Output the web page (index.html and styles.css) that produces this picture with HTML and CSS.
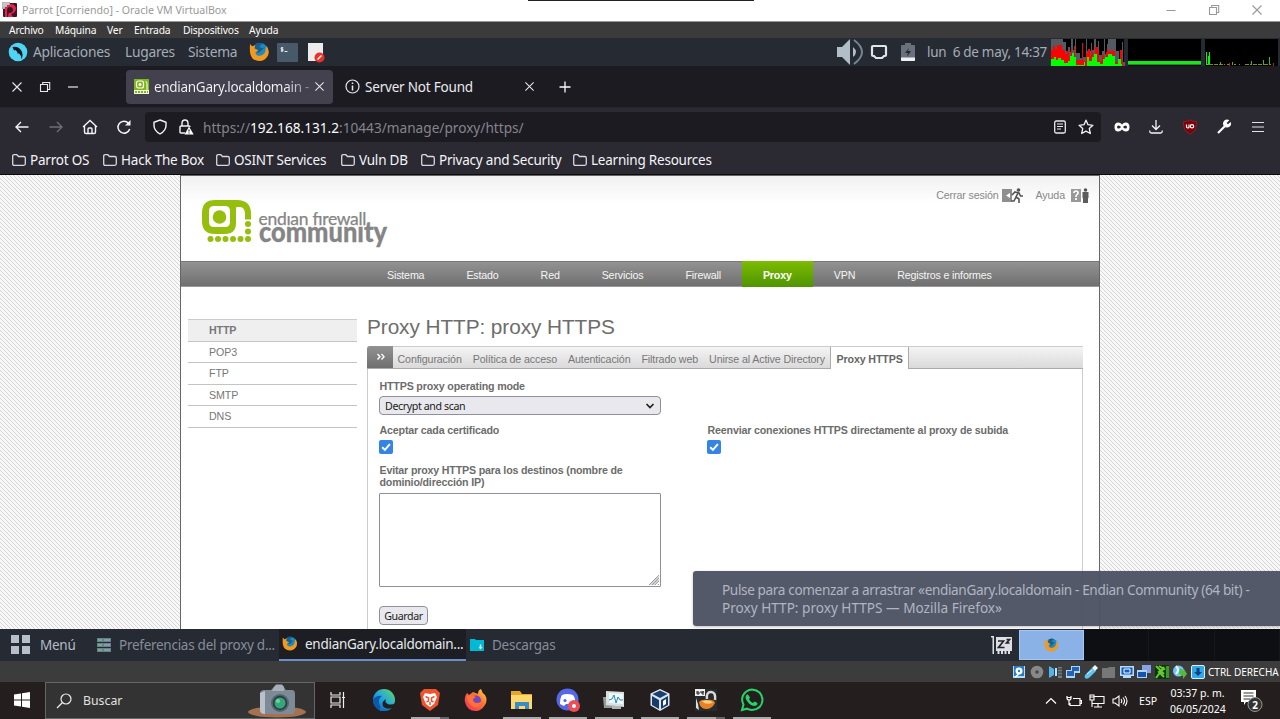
FILE: index.html
```html
<!DOCTYPE html>
<html lang="es">
<head>
<meta charset="utf-8">
<title>Parrot [Corriendo] - Oracle VM VirtualBox</title>
<link rel="stylesheet" href="styles.css">
</head>
<body>
<svg class="defs" width="0" height="0" aria-hidden="true">
  <defs>
    <symbol id="folder" viewBox="0 0 16 16"><path d="M1.7 4.2q0-1.5 1.5-1.5h2.6l1.7 1.8h5.3q1.5 0 1.5 1.5v5.8q0 1.5-1.5 1.5H3.2q-1.5 0-1.5-1.5z" fill="none" stroke="#d8d8de" stroke-width="1.3"/></symbol>
    <symbol id="fox" viewBox="0 0 20 20"><circle cx="10.5" cy="9" r="8" fill="#1d8ac4"/><path d="M5 3q4-4 9-1-3 0-4 3l4 1-4 4-3 0z" fill="#165f8f"/><path d="M1 2l2 2 3-1-1 3 4 2-3 2q1 4 5 3 5-1 5-7l1-2q3 5 1 9-3 5-8 5-8 0-9-8-.4-4 0-8z" fill="#f39a1e"/></symbol>
    <symbol id="close" viewBox="0 0 12 12"><path d="M1.5 1.5l9 9m0-9l-9 9" fill="none" stroke="currentColor" stroke-width="1.1"/></symbol>
    <symbol id="restore" viewBox="0 0 12 12"><path d="M1.5 3.5h7v7h-7zM3.7 3.5v-2h7v7h-2" fill="none" stroke="currentColor" stroke-width="1.1"/></symbol>
    <symbol id="check" viewBox="0 0 14 14"><rect width="14" height="14" rx="2" fill="#3584e4"/><path d="M3.2 7.2l2.7 2.7 5-5.7" fill="none" stroke="#fff" stroke-width="2"/></symbol>
    <linearGradient id="edge" x1="0" y1="1" x2="1" y2="0"><stop offset="0" stop-color="#0a5fc0"/><stop offset=".5" stop-color="#22a6df"/><stop offset="1" stop-color="#69dc58"/></linearGradient>
    <linearGradient id="ffx" x1="0" y1="1" x2="1" y2="0"><stop offset="0" stop-color="#f02b63"/><stop offset=".6" stop-color="#fd7430"/><stop offset="1" stop-color="#ffe34a"/></linearGradient>
  </defs>
</svg>

<header class="titlebar">
  <svg class="vm-logo" viewBox="0 0 16 16"><rect x="1" y="1" width="14" height="14" rx="1" fill="#4a1020"/><path d="M4 3q8-3 10 3 0 5-5 6l2 3H6q0-3 1-4 4 0 4-3 0-3-3-3-3 0-3 4v6H3V6z" fill="#d62a55"/><path d="M0 0h8v3H5v2H3v2H0z" fill="#a9a5a7"/><path d="M2 0v6M4 0v4M6 0v3M0 2h7M0 4h5" stroke="#e5e5e5" stroke-width=".6"/></svg>
  <span class="vm-title">Parrot [Corriendo] - Oracle VM VirtualBox</span>
  <svg class="win-btn" viewBox="0 0 12 12"><path d="M1.5 6.5h9" stroke="currentColor"/></svg>
  <svg class="win-btn"><use href="#restore"/></svg>
  <svg class="win-btn"><use href="#close"/></svg>
  <i class="top-strip"></i>
</header>

<nav class="vm-menu"><span>Archivo</span><span>Máquina</span><span>Ver</span><span>Entrada</span><span>Dispositivos</span><span>Ayuda</span></nav>

<div class="panel">
  <svg class="parrot" viewBox="0 0 20 20"><circle cx="10" cy="10" r="9.3" fill="#4fd4f3"/><path d="M4.500 5q6-1 9 4 2 3.500 0 8.500 0-4.500-3-6.500l-.5 1.500Q9.500 9 7.500 8L6 8.500z" fill="#10181f"/></svg>
  <span class="p-apps">Aplicaciones</span><span class="p-places">Lugares</span><span class="p-system">Sistema</span>
  <svg class="ic22"><use href="#fox"/></svg>
  <svg class="term" viewBox="0 0 21 19"><rect width="21" height="19" rx="1" fill="#48596a"/><path d="M6.300 4.800H4.200v1.500H6v1.700H3.800M5 4v5M7.500 8.500h3" fill="none" stroke="#e6ecef" stroke-width="1"/></svg>
  <svg class="note" viewBox="0 0 18 21"><path d="M1 1h15v18H1z" fill="#ececec"/><circle cx="12.500" cy="15.500" r="5" fill="#e5332b"/><path d="M10.500 17.500l4-4" stroke="#fff" stroke-width="1.500"/></svg>
  <div class="tray">
    <svg class="vol" viewBox="0 0 28 28"><path d="M1 9h5l8-8v26l-8-8H1z" fill="#b1bdc7"/><path d="M17 9q6 5 0 10z" fill="#b1bdc7"/><path d="M18 2q16 12 0 24" fill="none" stroke="#748592" stroke-width="2"/></svg>
    <svg class="net" viewBox="0 0 18 16"><path d="M3 2h12q1 0 1 1v8q0 1-1 1h-1l-2 2H6l-2-2H3q-1 0-1-1V3q0-1 1-1z" fill="none" stroke="#e1e4e8" stroke-width="2.200"/></svg>
    <svg class="bat" viewBox="0 0 14 18"><path d="M4 0h6v2h3q1 0 1 1v14q0 1-1 1H1q-1 0-1-1V3q0-1 1-1h3z" fill="#6b717b"/><path d="M8 5L4 10h3l-1 4 4-6H7z" fill="#252b34"/><path d="M0 14.500h14V17q0 1-1 1H1q-1 0-1-1z" fill="#eef0f2"/></svg>
    <span class="clock">lun&nbsp; 6 de may, 14:37</span>
    <svg class="graphs" viewBox="0 0 228 28">
      <path fill="#000" d="M0 1h73v27H0zM77 1h73v27H77zM154 1h73v27h-73z"/>
      <path fill="#555a62" d="M0 28V1h12v3h3v9h2V9h2v5h1V1h2v11h2V1h1v14h4v5h2V5h1v14h3V1h1v12h4V5h1v7h2V1h2v8h2V3h1v14h3v-4h2V1h1v15h2V6h1V1h8v12h3v8h3V4h1v20h2v4z"/>
      <path fill="#f00" d="M0 28V12h2V8h2v3h2V7h5v5h3v4h2v-3h2v6h2v-8h1v6h2V8h1v14h7V5h1v18h3v-8h2v-4h2v7h1v-5h2v5h2V9h3v4h1v10h3v-6h2v5h2v-8h1v-3h1v2h7v11h3v-3h2V12h2v12h1v4z"/>
      <path fill="#0f0" d="M0 28v-7h3v-2h2v3h2v-2h3v2h3v3h4v-2h2v-5h2v-3h2v4h2v8h8v-3h1v4h2v-9h2v4h3v-4h2v-3h3v8h3v2h3v-5h2v-2h3V16h4v2h3v8h3v-5h3v5h1v2z"/>
      <path fill="#19e71d" d="M77 23h73v4H77z"/><path d="M77 26.500h73" stroke="#0b9b13"/>
      <path fill="#0f0" d="M155 14h1v12h1V18h1v-4h1v12h2v1h-6z"/><path d="M158 26.500h16m2 0h2m5 0h2m3 0h1m5 0h6m2 0h9m2 0h4m2 0h1" stroke="#7f8f10" stroke-dasharray="4 1"/><path d="M169.500 24v3m12-3v3m19-4v4m12-5v5m6-8v8" stroke="#35be13"/><path d="M178.500 25v3m44-3v3" stroke="#bc1d12"/>
    </svg>
  </div>
</div>

<div class="tabstrip">
  <svg class="tb-ic"><use href="#close"/></svg>
  <svg class="tb-ic"><use href="#restore"/></svg>
  <svg class="tb-ic" viewBox="0 0 12 12"><path d="M1 6h10" stroke="currentColor" stroke-width="1.200"/></svg>
  <div class="tab active">
    <svg class="fav" viewBox="0 0 15 15"><path d="M0 0h15v15H0z" fill="#f2f7df"/><path d="M0 0h15v11H0z" fill="#7eb61b"/><rect x="2.500" y="2" width="7" height="7" rx="2" fill="none" stroke="#fff" stroke-width="1.200"/><circle cx="6" cy="5.500" r="1.500" fill="#fff"/><path d="M11.500 2.500q1.500 0 1.500 2v7" fill="none" stroke="#fff"/><path d="M1 13h13" stroke="#7eb61b" stroke-width="2" stroke-dasharray="2 1"/></svg>
    <span class="tab-title fade">endianGary.localdomain -</span>
    <svg class="tab-x"><use href="#close"/></svg>
  </div>
  <div class="tab">
    <svg class="fav" viewBox="0 0 15 15"><circle cx="7.500" cy="7.500" r="6.500" fill="none" stroke="#e9e9ed" stroke-width="1.200"/><path d="M7.500 6.500v5M7.500 3.500v1.500" stroke="#e9e9ed" stroke-width="1.500"/></svg>
    <span class="tab-title">Server Not Found</span>
    <svg class="tab-x"><use href="#close"/></svg>
  </div>
  <svg class="newtab" viewBox="0 0 12 12"><path d="M6 .5v11M.5 6h11" stroke="#fbfbfe" stroke-width="1.300"/></svg>
</div>

<div class="navbar">
  <svg class="nb" viewBox="0 0 16 16"><path d="M14.500 8H2m5-5L2 8l5 5" fill="none" stroke="#f4f4f8" stroke-width="1.400"/></svg>
  <svg class="nb" viewBox="0 0 16 16"><path d="M1.500 8H14M9 3l5 5-5 5" fill="none" stroke="#706f78" stroke-width="1.300"/></svg>
  <svg class="nb" viewBox="0 0 16 16"><path d="M1 8l7-6.500L15 8M2.500 7v6q0 1.500 1.500 1.500h8q1.500 0 1.500-1.500V7M6 14v-4q0-1 1-1h2q1 0 1 1v4" fill="none" stroke="#f4f4f8" stroke-width="1.400"/></svg>
  <svg class="nb" viewBox="0 0 16 16"><path d="M13.700 10A6 6 0 1 1 12.500 4.200" fill="none" stroke="#f4f4f8" stroke-width="1.500"/><path d="M14.500 1v5.500H9z" fill="#f4f4f8"/></svg>
  <div class="urlbar">
    <svg class="shield" viewBox="0 0 16 16"><path d="M8 1l6 2.300v3.200q0 5-6 8.500-6-3.500-6-8.500V3.300z" fill="none" stroke="#f4f4f8" stroke-width="1.400"/></svg>
    <svg class="lock" viewBox="0 0 16 16"><path d="M4 7V4.500Q4 1 7 1t3 3.500V7M7 14H3q-1 0-1-1V8q0-1 1-1h8q1 0 1 1" fill="none" stroke="#f4f4f8" stroke-width="1.400"/><path d="M11 7.500l4.700 8H6.500z" fill="#fff"/><path d="M11 10.500v2m0 1v1" stroke="#222" stroke-width="1.200"/></svg>
    <span class="url">https://<b>192.168.131.2</b>:10443/manage/proxy/https/</span>
    <svg class="reader" viewBox="0 0 14 14"><rect x="1.700" y="1" width="10.600" height="12" rx="1.500" fill="none" stroke="#e9e9ed" stroke-width="1.300"/><path d="M4 4h6M4 6.500h6M4 9h4" stroke="#e9e9ed"/></svg>
    <svg class="star" viewBox="0 0 16 16"><path d="M8 1.200l2 4.500 4.900.6-3.600 3.300 1 4.900L8 12.100l-4.300 2.400 1-4.900L1.100 6.300 6 5.700z" fill="none" stroke="#f4f4f8" stroke-width="1.300" stroke-linejoin="round"/></svg>
  </div>
  <svg class="ext" viewBox="0 0 16 16"><path d="M8 5.500Q6.500 3.500 4.200 3.500.5 3.500.5 8t3.700 4.500q2.300 0 3.800-2 1.500 2 3.800 2 3.700 0 3.700-4.500t-3.700-4.500Q9.500 3.500 8 5.500z" fill="#fff"/><path d="M3 8q0-1.500 1.500-1.500T7 8Q6 9.500 4.500 9.500T3 8zM13 8q0-1.500-1.500-1.500T9 8q1 1.500 2.500 1.500T13 8z" fill="#2b2a33"/></svg>
  <svg class="ext" viewBox="0 0 16 16"><path d="M8 1v9M4 6.500L8 10.500l4-4M1.800 11.500v1q0 1.500 1.500 1.500h9.400q1.500 0 1.500-1.500v-1" fill="none" stroke="#f4f4f8" stroke-width="1.300"/></svg>
  <svg class="ext" viewBox="0 0 16 16"><path d="M8 .8q3 2 6.500 1.800.8 9-6.500 12.600Q.7 11.600 1.500 2.600 5 2.800 8 .8z" fill="#800008" stroke="#a33" stroke-width=".5"/><path d="M4.500 5.500v2q0 1.500 1.300 1.500T7 7.500v-2" fill="none" stroke="#fff" stroke-width="1.200"/><circle cx="10" cy="7.300" r="1.700" fill="none" stroke="#fff" stroke-width="1.200"/></svg>
  <svg class="ext" viewBox="0 0 16 16"><path d="M2 14l7-7" stroke="#fff" stroke-width="2.200"/><path d="M13.300 1.300A4 4 0 1 0 14.700 3L12 5.300 10.600 4z" fill="#fff"/></svg>
  <svg class="ext" viewBox="0 0 16 16"><path d="M2 3.500h12M2 8h12M2 12.500h12" stroke="#e2e2e6" stroke-width="1.200"/></svg>
</div>

<div class="bookmarks">
  <span><svg><use href="#folder"/></svg>Parrot OS</span><span><svg><use href="#folder"/></svg>Hack The Box</span><span><svg><use href="#folder"/></svg>OSINT Services</span><span><svg><use href="#folder"/></svg>Vuln DB</span><span><svg><use href="#folder"/></svg>Privacy and Security</span><span><svg><use href="#folder"/></svg>Learning Resources</span>
</div>

<div class="viewport">
  <div class="page">
    <div class="page-head">
      <svg class="logo" viewBox="0 0 190 64">
        <path d="M14 1h22q14 0 14 14v5.500h-6V16q0-8-5-8h-3q-1 0-1 1v15q0 11-11 11H14Q1 35 1 22V14Q1 1 14 1z" fill="#96be0d"/><path d="M13 7h11q5 0 5 5v11q0 5-5 5H13q-5 0-5-5V12q0-5 5-5z" fill="#fff"/><circle cx="18.500" cy="18" r="6.800" fill="#96be0d"/>
        <g fill="#96be0d"><circle cx="47" cy="25" r="3"/><circle cx="47" cy="32.500" r="3"/><circle cx="47" cy="40" r="3"/><circle cx="39.500" cy="40" r="3"/><circle cx="32" cy="40" r="3"/><circle cx="24.500" cy="40" r="3"/><circle cx="17" cy="40" r="3"/><circle cx="9.500" cy="40" r="3"/></g>
        <text class="logo-a" x="57.500" y="26" textLength="108">endıan fırewall</text>
        <text class="logo-b" x="58" y="42.500" textLength="128" lengthAdjust="spacingAndGlyphs">communıty</text>
      </svg>
      <div class="head-links">
        <span>Cerrar sesión</span>
        <svg viewBox="0 0 22 15"><path d="M0 1h10v13H0z" fill="#8e8e8e"/><path d="M4 7.500l4-2.500v5z" fill="#fff"/><circle cx="16.500" cy="2" r="1.800" fill="#555"/><path d="M10 7l3-3 4 1 1.500 3 2.500 0M16 5l-2 4 3 2v4M14 9l-2 4H9" fill="none" stroke="#555" stroke-width="1.600"/></svg>
        <span class="help">Ayuda</span>
        <svg class="help-ic" viewBox="0 0 19 15"><path d="M0 1h10v13H0z" fill="#999"/><path d="M3 5q0-2 2-2t2 2q0 1-1 1.500T5 9m0 1v2" fill="none" stroke="#fff" stroke-width="1.700"/><circle cx="14.500" cy="2" r="1.800" fill="#555"/><path d="M11.500 4h6v6H17v5h-5v-5h-.5z" fill="#5c5c5c"/></svg>
      </div>
    </div>
    <nav class="main-nav"><span>Sistema</span><span>Estado</span><span>Red</span><span>Servicios</span><span>Firewall</span><span class="on">Proxy</span><span>VPN</span><span>Registros e informes</span></nav>
    <div class="columns">
      <ul class="side"><li class="on">HTTP</li><li>POP3</li><li>FTP</li><li>SMTP</li><li>DNS</li></ul>
      <main>
        <h1>Proxy HTTP: proxy HTTPS</h1>
        <div class="subtabs"><svg class="more" viewBox="0 0 26 22"><path d="M10.500 8l2.500 2.700-2.500 2.700M14.500 8l2.500 2.700-2.500 2.700" fill="none" stroke="#fff" stroke-width="1.400"/></svg><span>Configuración</span><span>Política de acceso</span><span>Autenticación</span><span>Filtrado web</span><span>Unirse al Active Directory</span><span class="on">Proxy HTTPS</span></div>
        <div class="form">
          <label>HTTPS proxy operating mode</label>
          <div class="select">Decrypt and scan<svg viewBox="0 0 10 10"><path d="M1.500 3l3.500 3.500L8.500 3" fill="none" stroke="#222" stroke-width="1.700"/></svg></div>
          <div class="checks">
            <div><label>Aceptar cada certificado</label><svg><use href="#check"/></svg></div>
            <div><label>Reenviar conexiones HTTPS directamente al proxy de subida</label><svg><use href="#check"/></svg></div>
          </div>
          <label class="bypass">Evitar proxy HTTPS para los destinos (nombre de<br>dominio/dirección IP)</label>
          <div class="area"><svg viewBox="0 0 12 12"><path d="M1 11L11 1M4 11l7-7M7 11l4-4M10 11l1-1M2.500 11L11 2.500M5.500 11L11 5.500" stroke="#999" stroke-width=".9"/></svg></div>
          <button class="save">Guardar</button>
        </div>
      </main>
    </div>
  </div>
  <div class="tooltip"><span class="line1">Pulse para comenzar a arrastrar «endianGary.localdomain - Endian Community (64 bit) -</span><br>Proxy HTTP: proxy HTTPS — Mozilla Firefox»</div>
</div>

<div class="dock">
  <svg class="grid-ic" viewBox="0 0 20 20"><path d="M0 0h8v8H0zM11 0h8v8h-8zM0 11h8v8H0zM11 11h8v8h-8z" fill="#b8bfca"/></svg>
  <span class="d-menu">Menú</span>
  <div class="task"><svg viewBox="0 0 16 16"><path d="M1 1h14v4H1zM1 6h14v4H1zM1 11h14v4H1z" fill="#66818e"/><path d="M2 2h4v2H2zM2 7h4v2H2zM2 12h4v2H2z" fill="#77a982"/><path d="M8 3h6M8 8h6M8 13h6" stroke="#a9b5ba"/></svg><span>Preferencias del proxy d...</span></div>
  <div class="task on"><svg><use href="#fox"/></svg><span>endianGary.localdomain...</span></div>
  <div class="task"><svg viewBox="0 0 16 16"><path d="M1 2h5l1 1h8v11H1z" fill="#00b9d4"/><path d="M11.500 7.500v3" stroke="#e9ffff" stroke-width="1.500"/><path d="M9.500 10.200h4l-2 2.200z" fill="#e9ffff"/></svg><span>Descargas</span></div>
  <svg class="sleep" viewBox="0 0 22 20"><path d="M0 1h3v18H1.500V2.500H0zM5 2h16v14h-2v3h-2v-3h-1.500v3h-2v-3H12v3h-2v-3H8.500v3h-2v-3H5z" fill="#dedfe5"/><path d="M7 6h5.500L7.500 12.500h6M15.500 4.500h3l-3 3.500h3" fill="none" stroke="#23252b" stroke-width="1.700"/></svg>
  <div class="ws-on"><svg><use href="#fox"/></svg></div><i></i><i></i><i></i>
</div>

<div class="vm-status">
  <svg viewBox="0 0 14 14"><path d="M1 1h12v12H1z" fill="#b7ddf6"/><path d="M2 1h10v10H2z" fill="#257bc8"/><circle cx="7" cy="6" r="3.500" fill="#fff"/><circle cx="7" cy="6" r="1.200" fill="#257bc8"/><path d="M3 12l4-3" stroke="#fff" stroke-width="1.500"/></svg>
  <svg viewBox="0 0 14 14"><circle cx="7" cy="7" r="6.300" fill="#888"/><circle cx="7" cy="7" r="1.700" fill="#444"/></svg>
  <svg viewBox="0 0 14 14"><path d="M1 1l5 3v6l-5 3z" fill="#52b3ec"/><path d="M7 3h2v8H7z" fill="#b2e8ff"/><path d="M10 2h4v11h-4z" fill="#737b82"/><path d="M10 4h4m-4 3h4m-4 3h4" stroke="#333"/></svg>
  <svg viewBox="0 0 14 14"><path d="M5 1h9v7H5zM0 5h9v8H0z" fill="#a9d6fa"/><path d="M6 2h7v4H6zM1 6h7v5H1z" fill="#2563b2"/></svg>
  <svg viewBox="0 0 14 14"><path d="M8 3l4 3-6 6q-3 3-5 1-1-2 1-4z" fill="#5dc5f4"/><path d="M8 3l3-3 3 3-3 3z" fill="#edf7ff"/><path d="M3 9l5-4" stroke="#d3f5ff"/></svg>
  <svg viewBox="0 0 14 14"><path d="M0 3h6l1-1h6v11H0z" fill="#777"/></svg>
  <svg viewBox="0 0 14 14"><path d="M0 1h14v10H0zM3 11h8v2H3z" fill="#b5dbff"/><path d="M1.500 2.500h11v7h-11z" fill="#155eb8"/><path d="M4 4h6v4H4z" fill="#155eb8" stroke="#fff"/></svg>
  <svg viewBox="0 0 14 14"><path d="M5 0h9v8H5z" fill="#8b9ee8"/><path d="M0 5h10v8H0z" fill="#acd5ff"/><path d="M1 7h8v5H1z" fill="#1755ac"/></svg>
  <svg viewBox="0 0 14 14"><path d="M0 0h14v14H0z" fill="#0d3412"/><path d="M1 1l8 8M9 2L1 13M4 1l5 3-5 3 5 5" stroke="#68cc27" stroke-width="2" fill="none"/><path d="M11 1h3v12h-3z" fill="#3b9b1d"/></svg>
  <svg viewBox="0 0 14 14"><circle cx="5.500" cy="6" r="5.500" fill="#6fc6f4"/><path d="M3 1q4 4 0 8" stroke="#e6f8ff" stroke-width="2" fill="none"/><path d="M7 3l4 3V4l3 5-4 5v-3L6 9z" fill="#55bb37"/></svg>
  <svg viewBox="0 0 14 14"><rect x=".5" y=".5" width="13" height="13" rx="1.500" fill="#2fa7e9" stroke="#d5f1ff"/><path d="M5.500 3h3v4H11l-4 4-4-4h2.500z" fill="#073f7c"/></svg>
  <span>CTRL DERECHA</span>
</div>

<footer class="taskbar">
  <svg class="win" viewBox="0 0 16 16"><path d="M0 2.500l7-1v6H0zM8 1.300L16 0v7.500H8zM0 8.500h7v6l-7-1zM8 8.500h8V16l-8-1.300z" fill="#fff"/></svg>
  <div class="search">
    <svg class="mag" viewBox="0 0 16 16"><circle cx="10" cy="6" r="5" fill="none" stroke="#eee" stroke-width="1.200"/><path d="M6.500 9.500L1 15" stroke="#eee" stroke-width="1.200"/></svg>
    <span>Buscar</span>
    <svg class="camera" viewBox="0 0 60 34"><ellipse cx="30" cy="28" rx="29" ry="5.500" fill="#a5714e"/><path d="M13 9q0-2 3-3h8l4-4h8l3 4h6q3 0 3 4v16q0 4-4 4H17q-4 0-4-4z" fill="#7e8b97"/><path d="M13 9l5-2v23q-5 0-5-4z" fill="#b9c2ca"/><path d="M27 3l2-2.500h6L37 3v4H25z" fill="#a7b0b8"/><circle cx="33" cy="19" r="9" fill="#56646f"/><circle cx="33" cy="19" r="7.200" fill="#263f42"/><circle cx="33" cy="19" r="5.500" fill="#36a579"/><circle cx="31" cy="17" r="2" fill="#6fd29b"/></svg>
  </div>
  <div class="app"><svg class="tv" viewBox="0 0 16 16"><path d="M1 0v3h9V0M1 16v-3h9v3M1 5h9v6H1zM13.500 0v16M12 5.500h3" fill="none" stroke="#eee" stroke-width="1.200"/></svg></div>
  <div class="app"><svg viewBox="0 0 24 24"><circle cx="12" cy="12" r="11" fill="url(#edge)"/><path d="M1 12q3-5 9-4-4 3-3 7 1 6 7 7.500Q4 24 1 14z" fill="#0c59a7"/><path d="M14 11q-2 4 3 5.500 4 .5 6-1.500 0 3-2 4.500-6 3-10-1-2-5 3-7.500z" fill="#231f1e"/><path d="M8 14q0 8 10 7.500l2-1.500q-4 3-12 3Z" fill="#1473c9"/></svg></div>
  <div class="app run split"><svg viewBox="0 0 24 24"><path d="M6 1h12l4 4-2 12-8 6-8-6L2 5z" fill="#f0522c"/><path d="M7 5l5 1 5-1 2 4-3 7-4 3-4-3-3-7z" fill="#fff"/><path d="M7.500 8.500l3 1.500v3l-2 1M16.500 8.500l-3 1.500v3l2 1M12 14v3" fill="none" stroke="#f0522c" stroke-width="1.500"/></svg></div>
  <div class="app"><svg viewBox="0 0 24 24"><path d="M3 5l2 2 4-3 5 2q0-4 3-5 1 4 4 6 3 5 0 10-4 6-9 6-9 0-11-9Q0 9 3 5z" fill="url(#ffx)"/><circle cx="12" cy="12.500" r="5" fill="#7646bd"/><path d="M3 8q4-2 9 1l-3 2q0 4 4 4 3 0 5-2-1 7-8 6-7-3-7-11z" fill="#ff7138"/></svg></div>
  <div class="app run"><svg viewBox="0 0 24 24"><path d="M1 3h9l2 3h10v15H1z" fill="#e4a829"/><path d="M1 7h21v14H1z" fill="#ffd76b"/><path d="M5 21v-7h14v7h-4v-3H9v3z" fill="#388cc7"/></svg></div>
  <div class="app run"><svg viewBox="0 0 24 24"><circle cx="11.500" cy="11.500" r="11" fill="#5568e8"/><path d="M6 7q5-2 11 0 3 4 2 9l-4 2-2-2h-3l-2 2-4-2q0-6 2-9z" fill="#fff"/><circle cx="9" cy="12.500" r="1.600" fill="#5568e8"/><circle cx="18" cy="18" r="6" fill="#ed4e55"/><circle cx="18" cy="18" r="2" fill="#fff"/></svg></div>
  <div class="app run"><svg viewBox="0 0 24 24"><path d="M1 9h10v11H2z" fill="#929a9b"/><path d="M4 3l18 1v15l-18-2z" fill="#d9dfdf"/><path d="M7 5l14 1v10L7 15z" fill="#eefaff"/><path d="M7 12l3-1 2-4 2 8 2-6 2 3h3" fill="none" stroke="#2889b6"/><path d="M10 18h9v3h-9z" fill="#aeb5b5"/></svg></div>
  <div class="app run"><svg viewBox="0 0 24 24"><path d="M12 1l9.500 4.500v12L12 23l-9.500-5.500v-12z" fill="#dde6f0"/><path d="M12 2.500l7.500 3.500-7.500 4-7.500-4z" fill="#173f70"/><path d="M4 8l7 4v9l-7-4zM20 8l-7 4v9l7-4z" fill="#163c6c"/><path d="M15 13l3-2v5l-3 2z" fill="#fff"/></svg></div>
  <div class="app run split"><svg viewBox="0 0 24 24"><path d="M1 1h22v22H1z" fill="#252b2e"/><path d="M1 1h10v7H1z" fill="#eee"/><path d="M3 3v3h2V4H3m4-1v2h2V3v4" stroke="#222" fill="none"/><path d="M13 11q-1-7 4-7 5 0 4 8" fill="none" stroke="#dddad4" stroke-width="2.500"/><path d="M5 14q2-3 8-2 7-1 8 3-3 6-9 6-6 0-7-7z" fill="#e68224"/><path d="M8 13.500q6-3 11 1-6 3-11-1z" fill="#ffcf83"/><path d="M2 10v10l3 2-1-6z" fill="#ddd"/></svg></div>
  <div class="app run"><svg viewBox="0 0 24 24"><path d="M2 22l1.500-5.500Q1 12 3 7.500 6 2 12 1.500q10 1 10.500 10.500Q22 21 12 22q-3 0-5-1.300z" fill="none" stroke="#27d366" stroke-width="2"/><path d="M8 6.500l2 3-1 2q2 3 4 3.500l1.500-1.500 3 1.500q0 3-3.500 3-4-.5-7-5-3-4 0-6.500z" fill="#27d366"/></svg></div>
  <div class="systray">
    <svg class="s1" viewBox="0 0 12 12"><path d="M1 8.500l5-5 5 5" fill="none" stroke="#fff" stroke-width="1.200"/></svg>
    <svg class="s2" viewBox="0 0 16 14"><path d="M7 4.500h7v7H4V9M14 6.500h1.500v3H14M1 2v2q0 2 2 2t2-2V2M3 6v5M1 3.500h4" fill="none" stroke="#fff" stroke-width="1.200"/></svg>
    <svg class="s2" viewBox="0 0 16 14"><path d="M5 2.500h10v7H3M9 9.500V13M5 13h8M1 1h4v5H1zM1 3h4M3 6v7" fill="none" stroke="#fff" stroke-width="1.100"/></svg>
    <svg class="s2" viewBox="0 0 16 14"><path d="M1 5h2l4-3v10L3 9H1zM9 5q1.500 2 0 4M11 3.500q3 3.500 0 7M13 2q4 5 0 10" fill="none" stroke="#fff" stroke-width="1.100"/></svg>
    <span class="esp">ESP</span>
    <span class="time">03:37 p. m.<br>06/05/2024</span>
    <svg class="notif" viewBox="0 0 24 26"><path d="M1 2h15v12H6l-2 3v-3H1z" fill="#fff"/><path d="M3.500 5h10M3.500 8h10M3.500 11h7" stroke="#333" stroke-width="1.200"/><circle cx="15" cy="16.500" r="7" fill="#333" stroke="#999"/><text x="12.300" y="20.500" class="badge">2</text></svg>
  </div>
</footer>
</body>
</html>
```
FILE: styles.css
```css
* { box-sizing: border-box; }
body { margin: 0; width: 1280px; height: 719px; overflow: hidden; display: flex; flex-direction: column; font-family: "Noto Sans", sans-serif; white-space: nowrap; }
svg { display: block; flex: none; }
.defs { position: absolute; }

.titlebar { position: relative; height: 22px; flex: none; background: #fff; border-bottom: 1px solid #999; display: flex; align-items: center; padding: 0 17px 2px 2px; color: #999; }
.vm-logo { width: 16px; height: 16px; }
.vm-title { flex: 1; margin-left: 4px; font-size: 10.6px; line-height: 18px; }
.win-btn { width: 12px; height: 12px; margin-left: 31px; }
.top-strip { position: absolute; left: 528px; top: 0; width: 226px; height: 1px; background: #222; }

.vm-menu { height: 16px; flex: none; background: #3b3b3b; color: #fff; display: grid; grid-template-columns: 46px 52px 27px 49px 66px 60px; padding-left: 9px; font-size: 10.3px; line-height: 16px; letter-spacing: -.2px; }

.panel { height: 28px; flex: none; background: #252a33; color: #a6acb7; display: flex; align-items: center; padding-left: 8px; font-size: 13.8px; line-height: 28px; letter-spacing: -.27px; }
.parrot { width: 20px; height: 20px; }
.p-apps { width: 92px; margin-left: 5px; }
.p-places { width: 63px; }
.p-system { width: 61px; }
.ic22 { width: 21px; height: 21px; }
.term { width: 21px; height: 19px; margin-left: 7px; }
.note { width: 18px; height: 21px; margin-left: 9px; }
.tray { margin-left: auto; display: flex; align-items: center; padding-right: 1px; }
.vol { width: 28px; height: 28px; }
.net { width: 18px; height: 16px; margin-left: 6px; }
.bat { width: 14px; height: 18px; margin-left: 13px; }
.clock { width: 124px; margin-left: 12px; font-size: 13.5px; letter-spacing: -.3px; }
.graphs { width: 228px; height: 28px; }

.tabstrip { height: 41px; flex: none; background: #1c1b22; color: #e9e9ed; display: flex; align-items: center; padding-left: 11px; font-size: 13.5px; letter-spacing: -.2px; }
.tb-ic { width: 12px; height: 12px; margin-right: 16px; }
.tab { width: 206px; height: 34px; display: flex; align-items: center; padding: 0 8px; margin-right: 6px; border-radius: 4px; }
.tab.active { width: 207px; margin-left: 31px; margin-right: 4px; background: #42414d; }
.fav { width: 15px; height: 15px; }
.tab-title { flex: 1; margin-left: 5px; }
.fade { background: linear-gradient(90deg, #f4f4f8 82%, #66656f 100%); background-clip: text; color: transparent; letter-spacing: -.3px; }
.tab-x { width: 11px; height: 11px; }
.newtab { width: 12px; height: 12px; margin-left: 10px; }

.navbar { height: 39px; flex: none; background: #2b2a33; display: flex; align-items: center; padding-left: 14px; border-top: 1px solid #25242c; }
.nb { width: 16px; height: 16px; margin-right: 18px; }
.urlbar { width: 956px; height: 30px; margin-left: -5px; background: #1c1b22; border-radius: 4px; display: flex; align-items: center; padding: 0 7px; color: #85848d; font-size: 13.65px; }
.shield, .lock, .star { width: 16px; height: 16px; }
.lock { margin-left: 10px; }
.url { flex: 1; margin-left: 9px; }
.url b { font-weight: 400; color: #fbfbfe; }
.reader { width: 14px; height: 14px; margin-right: 11px; }
.ext { width: 16px; height: 16px; margin-left: 13px; margin-right: 5px; }

.bookmarks { height: 29px; flex: none; background: #2b2a33; border-bottom: 1px solid #0c0c0d; color: #f4f4f8; display: grid; grid-template-columns: 91px 113px 125px 80px 152px 150px; padding-left: 11px; font-size: 13.5px; line-height: 26px; letter-spacing: -.22px; }
.bookmarks span { display: flex; align-items: center; gap: 3px; }
.bookmarks svg { width: 16px; height: 16px; }

.viewport { position: relative; height: 454px; flex: none; overflow: hidden; background: linear-gradient(45deg, #d6d6d6 0 12.5%, #f8f8f8 12.5% 50%, #d6d6d6 50% 62.5%, #f8f8f8 62.5%) 0 0 / 4px 4px; padding-left: 180px; font-family: "Liberation Sans", Arial, sans-serif; font-size: 10.67px; letter-spacing: -.12px; color: #777; }
.page { width: 920px; height: 454px; background: #fff; border: solid #666; border-width: 1px 1px 0; }
.page-head { height: 85px; display: flex; justify-content: space-between; align-items: flex-start; padding: 11px 9px 0 20px; background: linear-gradient(#f1f1f1, #fff 28px); }
.logo { width: 190px; height: 64px; margin-top: 12px; }
.logo text { font-family: Lato, sans-serif; fill: #858585; letter-spacing: 0; }
.logo .logo-a { font-size: 17.500px; stroke: #858585; stroke-width: .25px; }
.logo .logo-b { font-size: 28px; font-weight: 900; stroke: #858585; stroke-width: .3px; }
.head-links { display: flex; align-items: center; height: 16px; color: #888; }
.head-links svg { width: 22px; height: 15px; margin-left: 3px; }
.help { margin-left: 12px; }
.head-links .help-ic { width: 19px; margin-left: 6px; }
.main-nav { height: 26px; display: flex; padding-left: 185px; color: #f5f5f5; background: linear-gradient(#929292, #707070); border-top: 1px solid #777; border-bottom: 1px solid #999; line-height: 27px; letter-spacing: -.16px; }
.main-nav span { padding: 0 21px; }
.main-nav .on { font-weight: 700; background: linear-gradient(#7dbc00, #4e9500); color: #fff; margin: -1px 0; line-height: 29px; }
.columns { display: flex; padding-left: 7px; }
.side { list-style: none; width: 169px; margin: 32px 10px 0 0; padding: 0; border-top: 1px solid #ccc; }
.side li { height: 21.600px; line-height: 21px; padding-left: 21px; border-bottom: 1px solid #c4c4c4; }
.side .on { background: #efefef; font-weight: 700; }
main { width: 716px; }
h1 { margin: 27px 0 7px; font-size: 20.8px; font-weight: 400; line-height: 25px; letter-spacing: -.08px; color: #6d6d6d; }
.subtabs { height: 23px; display: flex; background: linear-gradient(#f4f4f4, #dadada); border: solid #ccc; border-width: 1px 0; border-bottom-color: #aaa; border-radius: 3px 0 0; line-height: 24px; }
.subtabs span { padding: 0 5.500px; }
.more { width: 26px; height: 22px; margin: -1px -1px 0 0; background: linear-gradient(#929292, #6f6f6f); border-radius: 3px 0 0; }
.subtabs .on { height: 22px; font-weight: 700; background: #fff; border: 1px solid #aaa; border-width: 0 1px; padding: 0 5px; color: #666; }
.form { height: 280px; border: solid #ccc; border-width: 0 1px; padding: 11px 0 0 11px; }
label { display: block; font-weight: 700; line-height: 12px; letter-spacing: -.17px; padding-left: .5px; color: #6c6c6c; }
.select { width: 282px; height: 19px; margin-top: 4px; display: flex; justify-content: space-between; align-items: center; padding: 0 5px; border: 1px solid #8f8f9d; border-radius: 4px; background: #e9e9ed; color: #1c1b22; font: 10.67px "Noto Sans", sans-serif; letter-spacing: -.4px; }
.select svg { width: 10px; height: 10px; }
.checks { display: grid; grid-template-columns: 328px 340px; margin-top: 9px; }
.checks svg { width: 14px; height: 14px; margin: 4px 0 0 0; }
.bypass { margin-top: 10px; }
.area { width: 282px; height: 94px; margin-top: 5px; border: 1px solid #8f8f9d; border-radius: 1px; display: flex; justify-content: flex-end; align-items: flex-end; }
.area svg { width: 12px; height: 12px; }
.save { display: block; width: 49px; height: 19px; margin-top: 19px; padding: 0; border: 1px solid #8f8f9d; border-radius: 4px; background: #e9e9ed; color: #1c1b22; font: 10.67px "Noto Sans", sans-serif; letter-spacing: -.4px; }
.tooltip { position: absolute; left: 693px; top: 396px; width: 590px; height: 55px; padding: 10px 0 0 29px; background: rgba(77, 82, 99, .96); border-radius: 3px; box-shadow: 0 1px 3px #8888; color: #b0b5c1; font: 13.6px/18px "Noto Sans", sans-serif; letter-spacing: 0; }
.line1 { letter-spacing: -.37px; }

.dock { height: 32px; flex: none; background: #252a33; color: #9ba2af; display: flex; align-items: center; padding-left: 11px; font-size: 13.5px; line-height: 30px; letter-spacing: -.27px; }
.grid-ic { width: 20px; height: 20px; }
.d-menu { width: 56px; margin-left: 9px; color: #b5bbc6; }
.task { height: 32px; display: flex; align-items: center; width: 183px; color: #868d99; }
.task svg { width: 16px; height: 16px; margin: 0 7px 0 0; }
.task.on { width: 187px; background: #1c1e23; color: #e8e9ec; border-bottom: 2px solid #6c8ec7; padding-left: 3px; }
.task.on + .task { padding-left: 3px; }
.sleep { width: 22px; height: 20px; margin-left: auto; margin-right: 6px; }
.ws-on { width: 65px; height: 30px; background: #8bb2e7; border: 1px solid #a4c7f5; display: flex; align-items: center; justify-content: center; }
.ws-on svg { width: 15px; height: 15px; }
.dock i { width: 65.500px; height: 32px; background: #0e0f12; border-right: 1px solid #15171b; }

.vm-status { height: 21px; flex: none; background: #3c3c3c; color: #fff; display: flex; align-items: center; justify-content: flex-end; gap: 3.900px; padding-right: 2px; font-size: 10px; }
.vm-status svg { width: 14px; height: 14px; }
.vm-status span { width: 70px; margin-left: -1px; }

.taskbar { height: 37px; flex: none; background: #241f1e; color: #fff; display: flex; }
.win { width: 16px; height: 16px; margin: 10px 15px 0 14px; }
.search { width: 270px; height: 37px; background: #333; border: 1px solid #666; display: flex; align-items: center; padding-left: 10px; font-size: 12.3px; color: #e2e2e2; }
.mag { width: 16px; height: 16px; margin-right: 11px; }
.camera { width: 60px; height: 34px; margin-left: auto; margin-right: 7px; }
.app { width: 46px; height: 37px; display: flex; flex-direction: column; align-items: center; padding-top: 6px; }
.app svg { width: 24px; height: 24px; }
.app .tv { width: 16px; height: 16px; margin-top: 4px; }
.run::after { content: ""; width: 38px; height: 2px; background: #aaa; margin-top: 5px; }
.split::after { background: linear-gradient(90deg, #aaa 76%, #666 76%); }
.systray { margin-left: auto; display: flex; align-items: center; padding-right: 16px; font-size: 10.6px; }
.s1 { width: 12px; height: 12px; margin-right: 9px; }
.s2 { width: 16px; height: 14px; margin-right: 7px; }
.esp { width: 31px; margin-left: 4px; }
.time { width: 55px; text-align: center; line-height: 16px; font-size: 10.500px; }
.notif { width: 24px; height: 26px; margin-left: 15px; }
.badge { fill: #fff; font: 700 10px "Noto Sans", sans-serif; }
```
